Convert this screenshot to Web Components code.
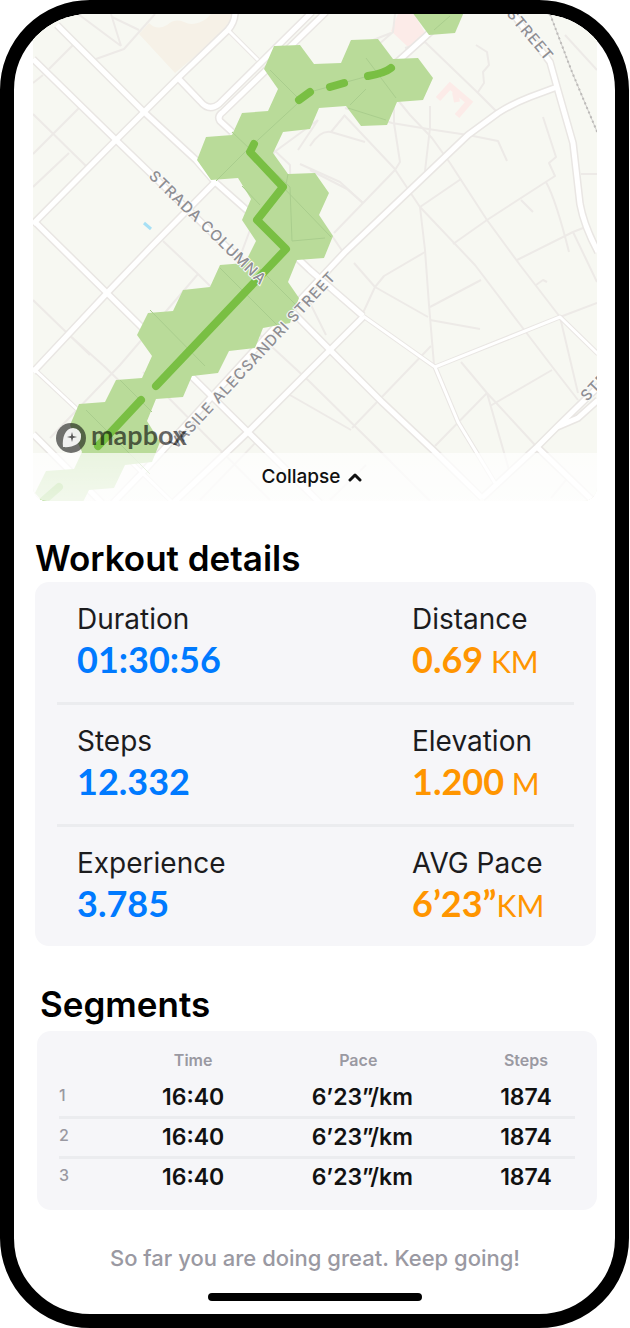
<!DOCTYPE html>
<html lang="en">
<head>
<meta charset="utf-8">
<meta name="viewport" content="width=device-width, initial-scale=1">
<title>Workout</title>
<style>
  body { margin: 0; background: #fff; font-family: Inter, "Liberation Sans", sans-serif; color: #000; }
</style>
</head>
<body>
<phone-frame>
  <route-map></route-map>
  <detail-section heading="Workout details">
    <stat-row>
      <stat-item label="Duration" value="01:30:56"></stat-item>
      <stat-item label="Distance" value="0.69" unit=" KM" tone="orange"></stat-item>
    </stat-row>
    <stat-row>
      <stat-item label="Steps" value="12.332"></stat-item>
      <stat-item label="Elevation" value="1.200" unit=" M" tone="orange"></stat-item>
    </stat-row>
    <stat-row>
      <stat-item label="Experience" value="3.785"></stat-item>
      <stat-item label="AVG Pace" value="6’23”" unit="KM" tone="orange"></stat-item>
    </stat-row>
  </detail-section>
  <segment-table></segment-table>
  <p slot="footer">So far you are doing great. Keep going!</p>
</phone-frame>

<template id="frame-tpl">
  <style>
    :host { display: block; margin-right: 1px; }
    .frame { display: flex; flex-direction: column; box-sizing: border-box; border: 14px solid #000; border-radius: 90px; overflow: hidden; padding: 0 18px 13px 19px; background: #fff; }
    footer { text-align: center; margin-top: 32px; }
    ::slotted(p) { margin: 0; font: 500 22px/32px Inter, sans-serif; color: #9a99a2; }
    .home { width: 38%; height: 8px; border-radius: 4px; background: #000; margin: 19px auto 0; }
  </style>
  <div class="frame">
    <slot></slot>
    <footer><slot name="footer"></slot></footer>
    <div class="home"></div>
  </div>
</template>

<template id="map-tpl">
  <style>
    :host { display: block; position: relative; border-radius: 0 0 14px 14px; overflow: hidden; background: #f7f8f2; }
    svg.map { display: block; width: 100%; height: auto; }
    .minor { fill: none; stroke: #edeae7; stroke-width: 2; stroke-linejoin: round; }
    .edge { fill: none; stroke: #e9e6e3; stroke-linejoin: round; }
    .road { fill: none; stroke: #fff; stroke-linejoin: round; }
    .label { font: 500 15px Inter, sans-serif; letter-spacing: 1px; fill: #8e8e93; stroke: #fafaf8; stroke-width: 2px; paint-order: stroke; }
    .brand { font: 700 27px Lato, sans-serif; fill: #000; fill-opacity: .6; }
    button { position: absolute; left: 0; right: 0; bottom: 0; width: 100%; height: 48px; display: flex; align-items: center; justify-content: center; gap: 8px; border: 0; padding: 0 6px 0 0; background: linear-gradient(rgba(255,255,255,.7), rgba(255,255,255,.82)); font: 500 19px/24px Inter, sans-serif; color: #111; cursor: pointer; }
  </style>
  <svg class="map" viewBox="33 14 564 487" role="img" aria-label="Route map">
    <defs>
      <g id="wide">
        <path d="M57 25L144 112L196 160L215 182L250 213L310 270L363 316"/>
        <path d="M33 59L116 140L265 284L330 350L382 402L433 450L482 498"/>
        <path d="M35 222L107 293L248 432L320 503"/>
        <path d="M33 224L116 140L144 112L178 78L228 30Q235 22 235 12"/>
        <path d="M33 372L107 293L152 246L215 182"/>
        <path d="M178 78L200 101Q209 112 219 104L312 12"/>
        <path d="M232 132L220 121Q217 116 223 112L326 12"/>
        <path d="M395 64L425 37L452 12"/>
        <path d="M557 87L530 97Q512 104 498 113L468 135L345 252L300 300L142 473L113 503"/>
        <path d="M363 317L330 350L248 432L173 503"/>
        <path d="M510 10L550 62L557 87L573 143L580 204Q584 226 598 252"/>
        <path d="M482 498L537 447L557 427L600 385M557 427L578 418L598 400"/>
        <path d="M537 447L592 500M33 434L102 503"/>
      </g>
      <g id="narrow">
        <path d="M363 316L435 367L458 422L495 483M435 367L560 317L598 354M228 30L258 60M33 368L80 412L173 503"/>
      </g>
    </defs>
    <rect x="33" y="14" width="564" height="487" fill="#f7f8f2"/>
    <path fill="#f6f1e7" d="M139 34L149 23Q157 31 167 25Q175 18 184 22Q194 27 206 19L211 14H232L229 28L175 73Z"/>
    <path fill="#fcebe8" d="M398 14H414L427 36L408 47L391 31Z"/>
    <path fill="none" stroke="#fcebe8" stroke-width="6" d="M438 99L450 86L469 102L457 116M455 92L457 102"/>
    <path stroke="#a7e0f5" stroke-width="3" d="M144 223L151 229"/>
    <g class="minor">
      <path d="M78 14L121 46M111 14L121 46M112 17L139 30M96 59L124 49L155 14M49 69L73 45M33 83L43 75M33 114L86 166M33 154L79 108M33 187L69 153"/>
      <path d="M163 241L198 274L271 346L310 382L375 446L430 501M33 300L66 332L105 367L143 404M33 370L78 325M50 438L120 365L198 274M66 332L90 355"/>
      <path d="M238 262L250 230M268 198L274 150L290 165L291 241L324 238M273 153L318 120M300 164L340 182L363 203M318 120L298 150M290 174L345 255"/>
      <path d="M350 42Q363 51 368 72L363 58L393 32L395 14M350 42L368 42L391 33M405 48L425 42L478 93L497 112M476 45L487 52L489 65L483 72L484 83L478 92M358 56L380 78L410 115L432 138L450 163L487 220L520 265L560 317L578 393"/>
      <path d="M345 108L392 123L428 129L468 135L498 141L507 161M394 101V123L400 162L395 170L334 233M430 106V128L428 145L425 171M344 115L394 168L420 207L475 265L522 327L554 369L578 400"/>
      <path d="M310 146Q320 130 331 132L365 142M331 132L345 115M310 170L347 189L363 203M420 207L461 179M420 207L425 250L429 305L434 365M543 117L556 157L549 163L555 176L487 220L453 244M546 182Q556 200 569 252M521 200L533 212M581 174H597M565 35L597 70M517 260L573 232L583 228M573 232L585 257L597 282"/>
      <path d="M354 263L375 287L384 276L425 252M375 287L428 317M375 287L362 315M430 307L481 280M430 320L480 329M431 346L352 428M310 303L326 335M536 285L543 280L547 282M560 317L597 303M461 362L487 393L500 407L535 445M552 370L490 406M487 393L435 446M487 393L509 470M290 395L351 430M330 500L366 465M566 480L551 498"/>
      <path d="M143 372L235 465L270 500M180 430L140 470M258 440L200 500"/>
    </g>
    <path fill="none" stroke="#cfcdcb" stroke-width="1" d="M550 14L572 72L598 134"/>
    <path fill="none" stroke="#bdbbb9" stroke-width="2" stroke-dasharray="2 3" d="M550 14L572 72L598 134"/>
    <use href="#wide" class="edge" stroke-width="8"/>
    <use href="#narrow" class="edge" stroke-width="5"/>
    <use href="#wide" class="road" stroke-width="5"/>
    <use href="#narrow" class="road" stroke-width="3"/>
    <path fill="#b9db99" d="M274 46L300 45L314 64L341 63L351 40L378 39L393 59L418 58L433 78L423 100L397 102L387 125L361 126L346 106L319 108L310 129L283 132L273 153L288 174L315 173L329 193L319 215L333 236L324 258L297 260L288 282L299 298L290 323L263 328L255 348L229 351L218 373L192 376L183 397L156 399L147 421L160 442L152 462L125 465L114 488L89 490L83 502L43 502L35 493L46 471L74 469L82 452L70 425L79 404L105 402L116 380L142 378L152 356L137 335L148 313L173 311L183 290L210 287L220 265L245 263L256 241L242 220L251 199L238 178L211 180L197 160L206 137L232 135L242 113L268 111L278 89L264 69Z"/>
    <path fill="#b9db99" d="M412 12L429 35L455 33L464 12Z"/>
    <g fill="none" stroke="#a9cd8d" stroke-width="1">
      <path d="M216 181L246 151L310 92L394 69M434 30L450 16M232 132L290 187L292 241L325 238M270 70L297 97M280 184L331 237M256 265L297 306M220 268L277 325M150 310L205 366M120 380L152 412M86 410L150 474M366 58L396 98M348 108L386 120M288 174L285 190M242 186L260 205M366 89L350 105"/>
    </g>
    <g fill="none" stroke="#79bf43" stroke-width="8" stroke-linecap="round" stroke-linejoin="round">
      <path d="M299 100L310 92M330 87L344 83M368 76Q385 73 391 68M254 144L250 152L283 187L257 220L286 249L156 386M141 400L98 446M59 487L43 501"/>
    </g>
    <text class="label" transform="translate(148 177) rotate(44)">STRADA COLUMNA</text>
    <text class="label" transform="translate(176 450) rotate(-47)">VASILE ALECSANDRI STREET</text>
    <text class="label" transform="translate(506 14) rotate(50)">STREET</text>
    <text class="label" transform="translate(587 402) rotate(-46)">STR</text>
    <circle cx="71" cy="438" r="15" fill="#000" fill-opacity=".55"/>
    <path fill="#fff" fill-opacity=".9" d="M63 447C62 438 65 428 73 428A8 8 0 0 1 81 437C81 444 72 448 63 447Z"/>
    <path fill="#555" d="M72 432L73 436L77 437L73 438L72 442L71 438L67 437L71 436Z"/>
    <text class="brand" x="91" y="445">mapbox</text>
  </svg>
  <button type="button">Collapse
    <svg width="14" height="10" viewBox="0 0 14 10" aria-hidden="true"><path d="M2 8L7 3L12 8" fill="none" stroke="#111" stroke-width="3" stroke-linecap="round" stroke-linejoin="round"/></svg>
  </button>
</template>

<template id="section-tpl">
  <style>
    :host { display: block; margin: 35px 1px 0 2px; }
    h2 { margin: 0 0 2px; font: 600 35px/44px Inter, sans-serif; }
    .card { background: #f6f6f9; border-radius: 14px; padding: 0 22px; }
  </style>
  <h2></h2>
  <div class="card"><slot></slot></div>
</template>

<template id="row-tpl">
  <style>
    :host { display: grid; grid-template-columns: minmax(0, 1fr) 162px; padding: 19px 0 18px 20px; border-top: 3px solid #ebecef; }
    :host(:first-child) { border-top: 0; padding-top: 20px; }
  </style>
  <slot></slot>
</template>

<template id="stat-tpl">
  <style>
    :host { display: block; }
    .label { font: 400 28px/34px Inter, sans-serif; color: #1c1c1e; }
    .value { font: 700 36px/46px Lato, sans-serif; color: #007aff; white-space: pre; }
    .unit { font-weight: 400; font-size: 30px; }
    :host([tone=orange]) .value { color: #ff9500; }
  </style>
  <div class="label"></div><div class="value"><span class="num"></span><span class="unit"></span></div>
</template>

<template id="segments-tpl">
  <style>
    :host { display: block; margin: 36px 0 0 4px; }
    h2 { margin: 0 0 5px 3px; font: 600 35px/44px Inter, sans-serif; }
    .card { background: #f6f6f9; border-radius: 14px; padding: 20px 22px 14px; }
    table { width: 100%; table-layout: fixed; border-collapse: collapse; }
    th, td { padding: 0; text-align: center; }
    thead th { font: 600 16px/18px Inter, sans-serif; color: #9a99a2; height: 28px; vertical-align: top; }
    thead td { line-height: 18px; }
    tbody th { font: 500 16px/32px Inter, sans-serif; color: #9a99a2; text-align: left; vertical-align: top; }
    tbody td { font: 600 23px/37px Inter, sans-serif; color: #111; }
    tbody td:nth-child(3) { padding-left: 8px; }
    tbody tr + tr { border-top: 3px solid #ebecef; }
    .index { width: 17%; } .time { width: 18%; } .pace { width: 46%; } .steps { width: 19%; }
  </style>
  <h2>Segments</h2>
  <div class="card">
    <table>
      <colgroup><col class="index"><col class="time"><col class="pace"><col class="steps"></colgroup>
      <thead><tr><td></td><th scope="col">Time</th><th scope="col">Pace</th><th scope="col">Steps</th></tr></thead>
      <tbody>
        <tr><th scope="row">1</th><td>16:40</td><td>6’23”/km</td><td>1874</td></tr>
        <tr><th scope="row">2</th><td>16:40</td><td>6’23”/km</td><td>1874</td></tr>
        <tr><th scope="row">3</th><td>16:40</td><td>6’23”/km</td><td>1874</td></tr>
      </tbody>
    </table>
  </div>
</template>

<script>
  class TemplateElement extends HTMLElement {
    constructor() {
      super();
      const tpl = document.getElementById(this.constructor.template);
      this.attachShadow({ mode: "open" }).append(tpl.content.cloneNode(true));
    }
    fill(selector, name) {
      this.shadowRoot.querySelector(selector).textContent = this.getAttribute(name) || "";
    }
  }
  class PhoneFrame extends TemplateElement { static template = "frame-tpl"; }
  class RouteMap extends TemplateElement { static template = "map-tpl"; }
  class DetailSection extends TemplateElement {
    static template = "section-tpl";
    connectedCallback() { this.fill("h2", "heading"); }
  }
  class StatRow extends TemplateElement { static template = "row-tpl"; }
  class StatItem extends TemplateElement {
    static template = "stat-tpl";
    connectedCallback() {
      this.fill(".label", "label");
      this.fill(".num", "value");
      this.fill(".unit", "unit");
    }
  }
  class SegmentTable extends TemplateElement { static template = "segments-tpl"; }
  customElements.define("phone-frame", PhoneFrame);
  customElements.define("route-map", RouteMap);
  customElements.define("detail-section", DetailSection);
  customElements.define("stat-row", StatRow);
  customElements.define("stat-item", StatItem);
  customElements.define("segment-table", SegmentTable);
</script>
</body>
</html>
